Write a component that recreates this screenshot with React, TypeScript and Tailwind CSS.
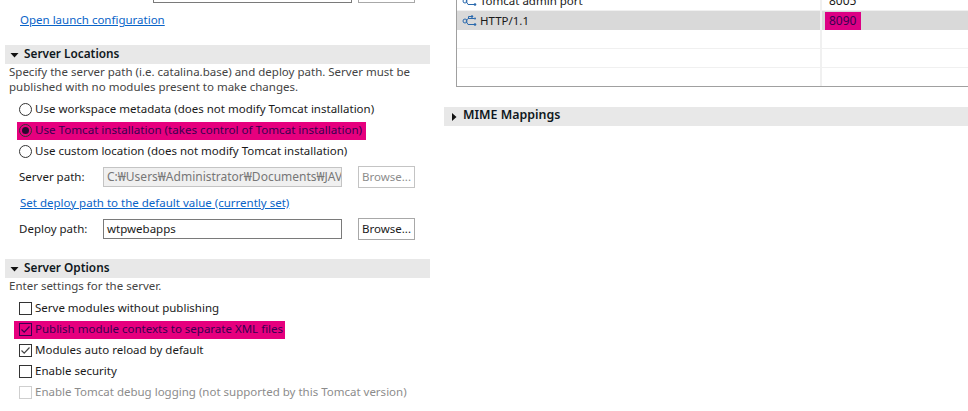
const font = { fontFamily: '"Noto Sans", sans-serif' };

function SectionBar({ title, open }: { title: string; open: boolean }) {
  return (
    <div className="flex h-[19px] items-center bg-[#e8e8e8] pl-[5px]">
      {open ? (
        <svg width="10" height="10" viewBox="0 0 10 10" className="mr-[4px]">
          <path d="M0.5 3h8L4.5 7.5z" fill="#111" />
        </svg>
      ) : (
        <svg width="10" height="10" viewBox="0 0 10 10" className="mr-[4px]">
          <path d="M3 1v8L7.5 5z" fill="#111" />
        </svg>
      )}
      <span className={`-mt-[2px] font-semibold text-[#0f1720] ${open ? "text-[11.8px]" : "text-[12.4px]"}`}>{title}</span>
    </div>
  );
}

function Radio({ label, checked, marked }: { label: string; checked?: boolean; marked?: boolean }) {
  return (
    <div className="flex h-[21px] items-center pl-[19px]">
      <div className={`flex h-[18px] items-center ${marked ? "-ml-[2px] bg-[#e6007e] pl-[2px] pr-[4px]" : ""}`}>
        <span className="mr-[3px] flex h-[13px] w-[13px] items-center justify-center rounded-full border border-[#333]">
          {checked && <span className="h-[7px] w-[7px] rounded-full bg-[#2a0a30]" />}
        </span>
        <span className={`-mt-[1px] text-[11.5px] ${marked ? "text-[11.6px] text-[#3a0050]" : "text-[#1a1a1a]"}`}>{label}</span>
      </div>
    </div>
  );
}

function Check({ label, checked, marked, disabled }: { label: string; checked?: boolean; marked?: boolean; disabled?: boolean }) {
  return (
    <div className="flex h-[21px] items-center pl-[19px]">
      <div className={`flex h-[18px] items-center ${marked ? "-ml-[5px] bg-[#e6007e] pl-[5px] pr-[2px]" : ""}`}>
        <span
          className={`mr-[3px] flex h-[13px] w-[13px] items-center justify-center border ${
            disabled ? "border-[#cfcfcf]" : marked ? "border-[#3a0050]" : "border-[#333]"
          }`}
        >
          {checked && (
            <svg width="11" height="11" viewBox="0 0 11 11">
              <path d="M1.5 5.5L4.2 8.2L9.5 2.5" fill="none" stroke={marked ? "#3a0050" : "#444"} strokeWidth="1.2" />
            </svg>
          )}
        </span>
        <span className={`-mt-[1px] text-[11.5px] ${disabled ? "text-[#8c8c8c]" : marked ? "text-[#3a0050]" : "text-[#1a1a1a]"}`}>
          {label}
        </span>
      </div>
    </div>
  );
}

function PathRow({ label, value, disabled }: { label: string; value: string; disabled?: boolean }) {
  return (
    <div className="flex h-[22px] items-center pl-[19px]">
      <span className="w-[84px] text-[11.5px] text-[#1a1a1a]">{label}</span>
      <div
        className={`flex h-[20px] w-[239px] items-center overflow-hidden whitespace-nowrap border px-[3px] ${
          disabled ? "border-[#c4c4c4] bg-[#f0f0f0] text-[12px] text-[#777]" : "border-[#7a7a7a] bg-white text-[11.5px] text-[#1a1a1a]"
        }`}
      >
        {value}
      </div>
      <button
        className={`ml-[16px] h-[22px] w-[57px] border text-[11.5px] ${
          disabled ? "border-[#c4c4c4] text-[#8c8c8c]" : "border-[#a8a8a8] text-[#1a1a1a]"
        }`}
      >
        Browse...
      </button>
    </div>
  );
}

function PortIcon() {
  return (
    <svg width="16" height="16" viewBox="0 0 16 16" fill="none" className="mr-[2px]">
      <path d="M4 8L6 5.5H12M4 8L6 11.5H12M6.5 5.5V3.5H9" stroke="#2a69ad" strokeWidth="1" />
      <circle cx="3" cy="8" r="2" stroke="#2a69ad" strokeWidth="1" />
      <circle cx="10" cy="3.5" r="1.2" fill="#2a69ad" />
      <circle cx="13" cy="5.5" r="1" fill="#2a69ad" />
      <circle cx="13" cy="11.5" r="1.3" fill="#2a69ad" />
    </svg>
  );
}

function TableRow({ name, port, selected }: { name?: string; port?: string; selected?: boolean }) {
  return (
    <div className={`flex h-[19px] items-center ${selected ? "bg-[#d9d9d9]" : "border-b border-[#f0f0f0]"}`}>
      <div className="flex h-full w-[365px] items-center border-r-2 border-[#f0f0f0] pl-[5px] text-[11.5px] text-[#1a1a1a]">
        {name && <PortIcon />}
        {name}
      </div>
      {port && (
        <span className={`ml-[3px] flex h-[18px] w-[36px] items-center px-[4px] text-[12px] ${selected ? "bg-[#dc0084] text-[#3a0050]" : "text-[#1a1a1a]"}`}>
          {port}
        </span>
      )}
    </div>
  );
}

export default function App() {
  return (
    <div className="flex h-[411px] w-[968px] overflow-hidden bg-white" style={font}>
      {/* left column */}
      <div className="ml-[5px] w-[425px] shrink-0">
        <div className="-mt-[19px] flex h-[22px] justify-end">
          <div className="ml-[148px] h-[22px] w-[199px] border border-[#7a7a7a]" />
          <div className="ml-[6px] mr-[15px] h-[22px] w-[57px] border border-[#a8a8a8]" />
        </div>
        <a className="mt-[8px] ml-[15px] block h-[18px] text-[11.5px] leading-[18px] text-[#0a64c8] underline">
          Open launch configuration
        </a>
        <div className="mt-[16px]">
          <SectionBar title="Server Locations" open />
        </div>
        <p className="ml-[4px] text-[11.5px] leading-[15px] text-[#444]">
          Specify the server path (i.e. catalina.base) and deploy path. Server must be
          <br />
          published with no modules present to make changes.
        </p>
        <div className="-ml-[5px] mt-[5px]">
          <Radio label="Use workspace metadata (does not modify Tomcat installation)" />
          <Radio label="Use Tomcat installation (takes control of Tomcat installation)" checked marked />
          <Radio label="Use custom location (does not modify Tomcat installation)" />
          <div className="mt-[4px]">
            <PathRow label="Server path:" value="C:₩Users₩Administrator₩Documents₩JAVA" disabled />
          </div>
          <a className="ml-[20px] mt-[5px] block h-[20px] text-[11.5px] leading-[20px] text-[#0a64c8] underline">
            Set deploy path to the default value (currently set)
          </a>
          <div className="mt-[5px]">
            <PathRow label="Deploy path:" value="wtpwebapps" />
          </div>
        </div>
        <div className="mt-[19px]">
          <SectionBar title="Server Options" open />
        </div>
        <p className="ml-[4px] text-[11.5px] leading-[15px] text-[#444]">Enter settings for the server.</p>
        <div className="-ml-[5px] mt-[5px]">
          <Check label="Serve modules without publishing" />
          <Check label="Publish module contexts to separate XML files" checked marked />
          <Check label="Modules auto reload by default" checked />
          <Check label="Enable security" />
          <Check label="Enable Tomcat debug logging (not supported by this Tomcat version)" disabled />
        </div>
      </div>

      {/* right column */}
      <div className="ml-[14px] flex-1">
        <div className="-mt-[8px] ml-[12px] h-[95px] border-b border-l border-[#a0a0a0]">
          <TableRow name="Tomcat admin port" port="8005" />
          <TableRow name="HTTP/1.1" port="8090" selected />
          <TableRow />
          <TableRow />
          <div className="h-[18px] w-[365px] border-r-2 border-[#f0f0f0]" />
        </div>
        <div className="mt-[20px]">
          <SectionBar title="MIME Mappings" open={false} />
        </div>
      </div>
    </div>
  );
}
